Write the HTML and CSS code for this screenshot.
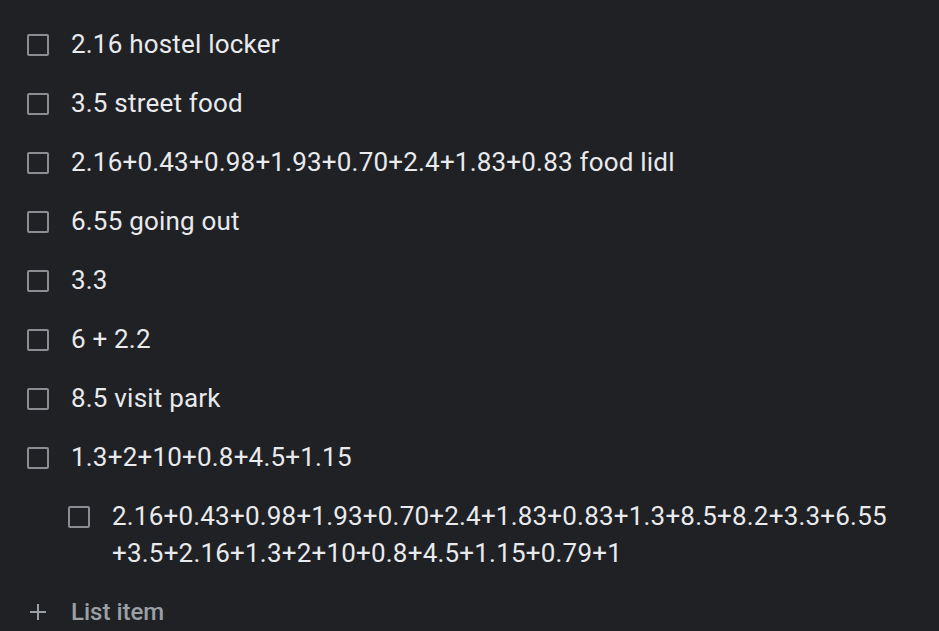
FILE: index.html
```html
<!DOCTYPE html>
<html>
<head>
<meta charset="utf-8">
<link rel="stylesheet" href="styles.css">
</head>
<body>
<ul class="list">
  <li class="item"><span class="box"></span><span class="text">2.16 hostel locker</span></li>
  <li class="item"><span class="box"></span><span class="text">3.5 street food</span></li>
  <li class="item"><span class="box"></span><span class="text">2.16+0.43+0.98+1.93+0.70+2.4+1.83+0.83 food lidl</span></li>
  <li class="item"><span class="box"></span><span class="text">6.55 going out</span></li>
  <li class="item"><span class="box"></span><span class="text">3.3</span></li>
  <li class="item"><span class="box"></span><span class="text">6 + 2.2</span></li>
  <li class="item"><span class="box"></span><span class="text">8.5 visit park</span></li>
  <li class="item"><span class="box"></span><span class="text">1.3+2+10+0.8+4.5+1.15</span></li>
  <li class="item nested"><span class="box"></span><span class="text">2.16+0.43+0.98+1.93+0.70+2.4+1.83+0.83+1.3+8.5+8.2+3.3+6.55<br>+3.5+2.16+1.3+2+10+0.8+4.5+1.15+0.79+1</span></li>
  <li class="item add"><span class="plus"><svg width="18" height="18" viewBox="0 0 18 18"><path d="M9 1v16M1 9h16" stroke="#9aa0a6" stroke-width="2" fill="none"/></svg></span><span class="text">List item</span></li>
</ul>
</body>
</html>
```
FILE: styles.css
```css
html, body {
  margin: 0;
  padding: 0;
  background: #202124;
  height: 100%;
}
body {
  font-family: Roboto, "Noto Sans", sans-serif;
  color: #e8eaed;
  overflow: hidden;
}
.list {
  list-style: none;
  margin: 0;
  padding: 14.5px 0 0 27px;
}
.item {
  display: flex;
  align-items: flex-start;
  padding: 11px 0;
  font-size: 26px;
  letter-spacing: 0.2px;
  line-height: 37px;
}
.box {
  flex: none;
  width: 22px;
  height: 22px;
  box-sizing: border-box;
  border: 2px solid #8a8d91;
  border-radius: 2px;
  margin-top: 8px;
  margin-right: 22px;
}
.nested {
  padding-left: 41px;
}
.add .text {
  color: #9aa0a6;
  font-weight: 500;
  font-size: 24px;
  letter-spacing: 0;
}
.plus {
  flex: none;
  width: 22px;
  height: 37px;
  display: flex;
  align-items: center;
  justify-content: center;
  margin-right: 22px;
}
```
